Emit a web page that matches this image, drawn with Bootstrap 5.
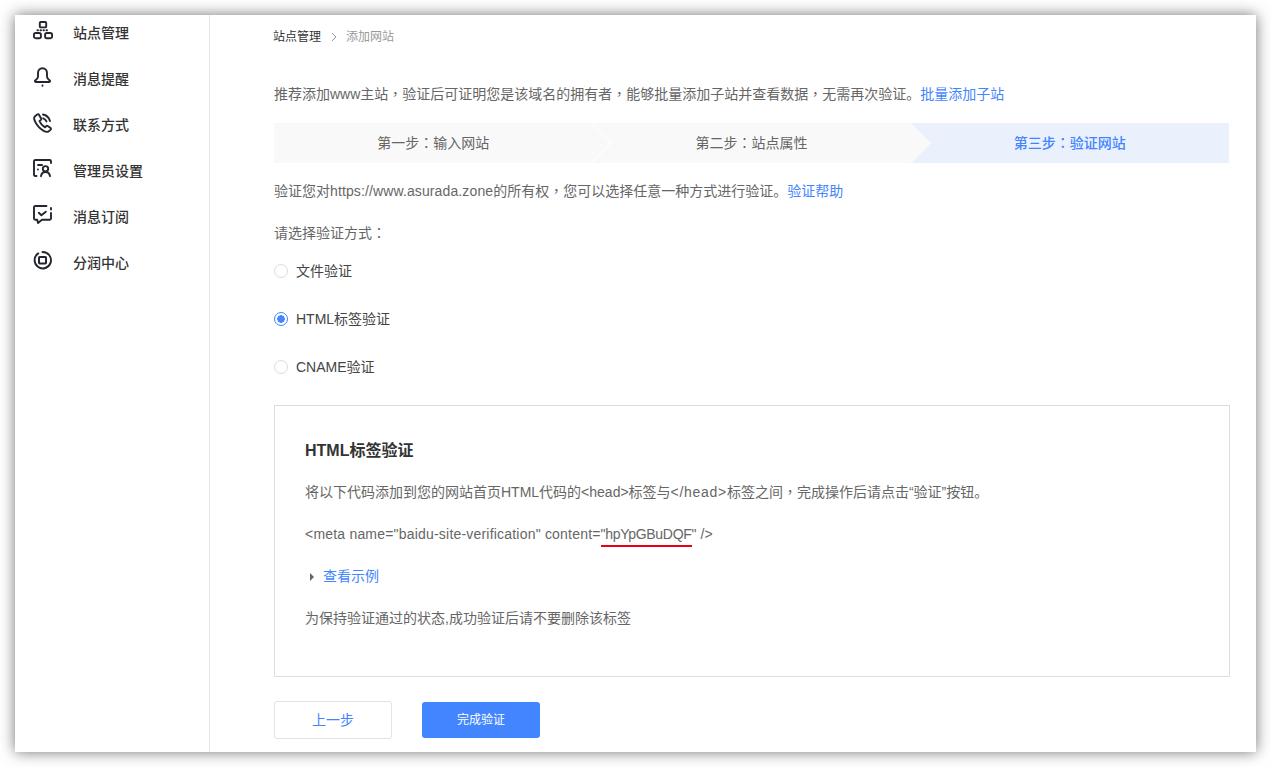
<!DOCTYPE html>
<html lang="zh-CN">
<head>
  <meta charset="UTF-8">
  <meta name="viewport" content="width=device-width, initial-scale=1.0">
  <title>添加网站</title>
  <link href="https://cdn.jsdelivr.net/npm/bootstrap@5.3.0/dist/css/bootstrap.min.css" rel="stylesheet">
  <style>
    html, body { height: 100%; overflow: hidden; }
    body {
      background: #fff;
      color: #666;
      font-family: "Liberation Sans", "Noto Sans CJK SC", sans-serif;
      font-size: 14px;
      line-height: 20px;
      padding: 15px;
    }
    a { color: #4285ff; text-decoration: none; }
    .app-frame {
      width: 1241px;
      height: 737px;
      background: #fff;
      box-shadow: 0 0 14px rgba(0, 0, 0, .55);
      overflow: hidden;
    }
    .side-menu {
      width: 195px;
      border-right: 1px solid #e8e8e8;
      padding: 0 0 0 18px;
    }
    .side-menu ul { margin-top: -5px; }
    .side-menu a {
      height: 46px;
      color: #333;
      font-weight: 500;
      padding: 0;
    }
    .side-menu svg {
      width: 20px;
      height: 20px;
      margin-right: 20px;
      margin-bottom: 4px;
      flex: none;
      fill: none;
      stroke: #23262f;
      stroke-width: 1.9;
      stroke-linecap: round;
      stroke-linejoin: round;
    }
    .main-pane { padding: 12px 26px 0 64px; min-width: 0; }
    .crumbs { font-size: 12px; color: #999; margin-bottom: 37px; margin-left: -1px; }
    .crumbs b { font-weight: 400; color: #333; }
    .crumbs svg { width: 8px; height: 10px; margin: 0 8px 0 9px; fill: none; stroke: #999; stroke-width: 1; }
    .step-bar { margin: 19px 1px 18px 0; }
    .step-item {
      position: relative;
      height: 40px;
      line-height: 40px;
      background: #f9f9f9;
      text-align: center;
    }
    .step-item:not(:last-child)::after {
      content: "";
      position: absolute;
      z-index: 1;
      top: 5.86px;
      right: -14.14px;
      width: 28.28px;
      height: 28.28px;
      background: #f9f9f9;
      border-top: 1px solid #fff;
      border-right: 1px solid #fff;
      transform: rotate(45deg);
    }
    .step-item:nth-child(2)::after { border-color: #f9f9f9; }
    .step-item.step-on { background: #eaf1fd; color: #4285ff; font-weight: 500; }
    .pun-mid { font-family: "Noto Sans CJK TC", sans-serif; line-height: 1; }
    .lat-a { letter-spacing: .12px; }
    .lat-b { letter-spacing: .2px; }
    .lat-c { letter-spacing: .7px; }
    .pick-label { margin: 22px 0 4px; }
    .pick-row { height: 48px; margin: 0; padding: 0; gap: 8px; color: #444; }
    .pick-row .form-check-input {
      float: none;
      width: 14px;
      height: 14px;
      margin: 0;
      border-color: #ddd;
    }
    .pick-row .form-check-input:checked {
      background: radial-gradient(circle, #4285ff 0 3.5px, #fff 4px);
      border-color: #4285ff;
    }
    .verify-box {
      margin-top: 14px;
      border: 1px solid #ddd;
      padding: 33px 30px 48px;
    }
    .verify-box h5 {
      font-size: 16px;
      line-height: 24px;
      font-weight: 700;
      color: #333;
      margin: 0 0 19px;
    }
    .verify-box p { margin: 0 0 22px; }
    .verify-box p:last-child { margin: 0; }
    .token-mark { border-bottom: 2px solid #e60012; padding-bottom: 3px; letter-spacing: -.3px; }
    .tri-right {
      display: inline-block;
      border-left: 4px solid #666;
      border-top: 4px solid transparent;
      border-bottom: 4px solid transparent;
      margin: 0 9px 0 5px;
    }
    .btn-row { margin-top: 24px; gap: 30px; }
    .btn-row .btn {
      width: 118px;
      height: 38px;
      padding: 0;
      border-radius: 3px;
      line-height: 36px;
    }
    .btn-back { color: #4285ff; border: 1px solid #e3e3e3; background: #fff; font-size: 14px; }
    .btn-row .btn-done { color: #fff; background: #4285ff; border: 0; font-size: 12px; height: 36px; margin-top: 1px; width: 118px; }
  </style>
</head>
<body>
  <div class="app-frame d-flex">
    <nav class="side-menu flex-shrink-0">
      <ul class="nav flex-column">
        <li class="nav-item">
          <a class="nav-link d-flex align-items-center" href="#">
            <svg viewBox="0 0 20 20"><rect x="6.800" y="1" width="6.400" height="5.400" rx="1"/><rect x=".9" y="12" width="7" height="5.200" rx="1.800"/><rect x="12.100" y="12" width="7" height="5.200" rx="1.800"/><path d="M4.500 9.200h11" stroke-dasharray=".5 2.500"/></svg>
            站点管理
          </a>
        </li>
        <li class="nav-item">
          <a class="nav-link d-flex align-items-center" href="#">
            <svg viewBox="0 0 20 20"><path d="M9.500 1.200c-2.800 0-4.500 2.200-4.500 4.800v3.800c0 1.500-1.300 2.500-2.700 3.700-.8.700-.4 1.500.5 1.500h13.400c.9 0 1.300-.8.500-1.500-1.400-1.200-2.700-2.200-2.700-3.700V6c0-2.600-1.700-4.800-4.500-4.800z"/><path d="M9.500 18.500v.2"/></svg>
            消息提醒
          </a>
        </li>
        <li class="nav-item">
          <a class="nav-link d-flex align-items-center" href="#">
            <svg viewBox="0 0 20 20"><path d="M4.200 1.500 2 3.200C.8 4.300 1 6 1.800 7.800c1.500 3.600 4.500 7.300 8.500 9.800 2.200 1.300 4.200 1.800 5.500.7l1.900-1.700c.5-.5.400-1.200-.1-1.600l-2.900-2c-.5-.3-1-.3-1.400.1l-1.200 1.200c-2.400-1.200-4.600-3.800-5.600-6.300l1.400-1.100c.4-.4.500-.9.200-1.400L6 1.700c-.4-.6-1.200-.7-1.800-.2z"/><path d="M10 1.500c3.300.6 6 3.300 7 6.500M10.200 5.300c1.500.5 2.700 1.600 3.300 3.100"/></svg>
            联系方式
          </a>
        </li>
        <li class="nav-item">
          <a class="nav-link d-flex align-items-center" href="#">
            <svg viewBox="0 0 20 20"><path d="M3.500 17H2.200C1.500 17 1 16.500 1 15.800V2.200C1 1.500 1.500 1 2.200 1h14.600c.7 0 1.200.5 1.200 1.200V4"/><path d="M5 6h4M5 10.500v.1"/><circle cx="12.500" cy="9.800" r="2.700"/><path d="M8 17.200c.4-2.600 2.200-4.200 4.500-4.200s4.100 1.600 4.500 4.200"/></svg>
            管理员设置
          </a>
        </li>
        <li class="nav-item">
          <a class="nav-link d-flex align-items-center" href="#">
            <svg viewBox="0 0 20 20"><path d="M13.500 1H2.200C1.500 1 1 1.500 1 2.200v11.400c0 .7.500 1.200 1.200 1.200h2l.8 3.200 4-3.200h7.800c.7 0 1.200-.5 1.200-1.200V8M18 3v1.500"/><path d="m5.800 7.800 2.600 2.500 4.400-3.600"/></svg>
            消息订阅
          </a>
        </li>
        <li class="nav-item">
          <a class="nav-link d-flex align-items-center" href="#">
            <svg viewBox="0 0 20 20"><path d="M5.200 2.400A8.200 8.200 0 1 0 9.500 1"/><rect x="6" y="6" width="7" height="6.400" rx=".6" stroke-width="2"/></svg>
            分润中心
          </a>
        </li>
      </ul>
    </nav>

    <main class="main-pane flex-grow-1">
      <div class="crumbs d-flex align-items-center">
        <b>站点管理</b>
        <svg viewBox="0 0 8 10"><path d="m2 1 4 4-4 4"/></svg>
        <span>添加网站</span>
      </div>

      <div>推荐添加www主站<span class="pun-mid" lang="zh-TW">，</span>验证后可证明您是该域名的拥有者<span class="pun-mid" lang="zh-TW">，</span>能够批量添加子站并查看数据<span class="pun-mid" lang="zh-TW">，</span>无需再次验证。<a href="#">批量添加子站</a></div>

      <div class="step-bar row g-0">
        <div class="step-item col-4">第一步<span class="pun-mid" lang="zh-TW">：</span>输入网站</div>
        <div class="step-item col-4">第二步<span class="pun-mid" lang="zh-TW">：</span>站点属性</div>
        <div class="step-item step-on col-4">第三步<span class="pun-mid" lang="zh-TW">：</span>验证网站</div>
      </div>

      <div>验证您对<span class="lat-a">https://www.asurada.zone</span>的所有权<span class="pun-mid" lang="zh-TW">，</span>您可以选择任意一种方式进行验证。<a href="#">验证帮助</a></div>

      <div class="pick-label">请选择验证方式<span class="pun-mid" lang="zh-TW">：</span></div>
      <label class="pick-row form-check d-flex align-items-center">
        <input class="form-check-input" type="radio" name="verifyWay">文件验证
      </label>
      <label class="pick-row form-check d-flex align-items-center">
        <input class="form-check-input" type="radio" name="verifyWay" checked>HTML标签验证
      </label>
      <label class="pick-row form-check d-flex align-items-center">
        <input class="form-check-input" type="radio" name="verifyWay">CNAME验证
      </label>

      <div class="verify-box">
        <h5>HTML标签验证</h5>
        <p>将以下代码添加到您的网站首页HTML代码的&lt;head&gt;标签与<span class="lat-c">&lt;/head&gt;</span>标签之间<span class="pun-mid" lang="zh-TW">，</span>完成操作后请点击“验证”按钮。</p>
        <p><span class="lat-b">&lt;meta name="baidu-site-verification" content=</span><span class="token-mark">"hpYpGBuDQF</span><span class="lat-a">" /&gt;</span></p>
        <p><span class="tri-right"></span><a href="#">查看示例</a></p>
        <p>为保持验证通过的状态,成功验证后请不要删除该标签</p>
      </div>

      <div class="btn-row d-flex align-items-start">
        <button class="btn btn-back" type="button">上一步</button>
        <button class="btn btn-done" type="button">完成验证</button>
      </div>
    </main>
  </div>
  <script src="https://cdn.jsdelivr.net/npm/bootstrap@5.3.0/dist/js/bootstrap.bundle.min.js"></script>
</body>
</html>
